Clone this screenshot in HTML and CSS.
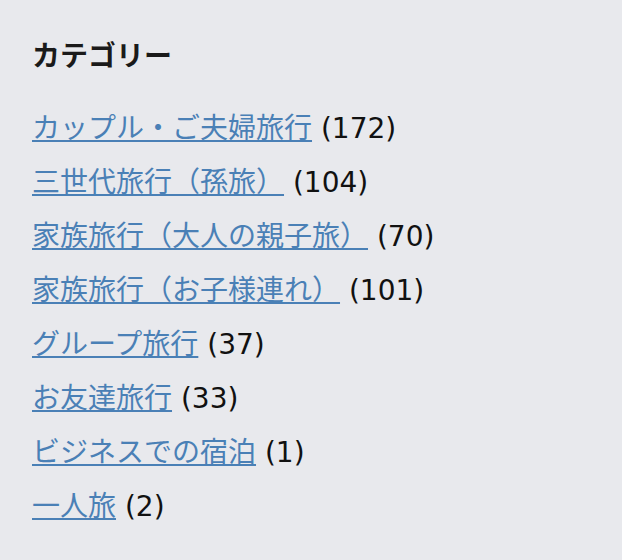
FILE: index.html
```html
<!DOCTYPE html>
<html lang="ja">
<head>
  <meta charset="UTF-8">
  <meta name="viewport" content="width=device-width, initial-scale=1.0">
  <title>カテゴリー</title>
  <link rel="stylesheet" href="styles.css">
</head>
<body>
  <div class="widget">
    <h2 class="widget-title">カテゴリー</h2>
    <ul class="cat-list">
      <li><a href="#">カップル・ご夫婦旅行</a> (172)</li>
      <li><a href="#">三世代旅行（孫旅）</a> (104)</li>
      <li><a href="#">家族旅行（大人の親子旅）</a> (70)</li>
      <li><a href="#">家族旅行（お子様連れ）</a> (101)</li>
      <li><a href="#">グループ旅行</a> (37)</li>
      <li><a href="#">お友達旅行</a> (33)</li>
      <li><a href="#">ビジネスでの宿泊</a> (1)</li>
      <li><a href="#">一人旅</a> (2)</li>
    </ul>
  </div>
</body>
</html>
```

FILE: styles.css
```css
body {
  margin: 0;
  padding: 0;
  background: #e8e9ed;
  font-family: "DejaVu Sans", "Noto Sans CJK JP", sans-serif;
  color: #111;
}
.widget {
  padding: 37px 32px;
}
.widget-title {
  margin: 0 0 25px;
  font-size: 28px;
  line-height: 40px;
  font-weight: bold;
  color: #1a1a1a;
}
.cat-list {
  list-style: none;
  margin: 0;
  padding: 0;
  font-size: 28px;
  line-height: 54px;
}
.cat-list a {
  color: #4a80b6;
}
```
